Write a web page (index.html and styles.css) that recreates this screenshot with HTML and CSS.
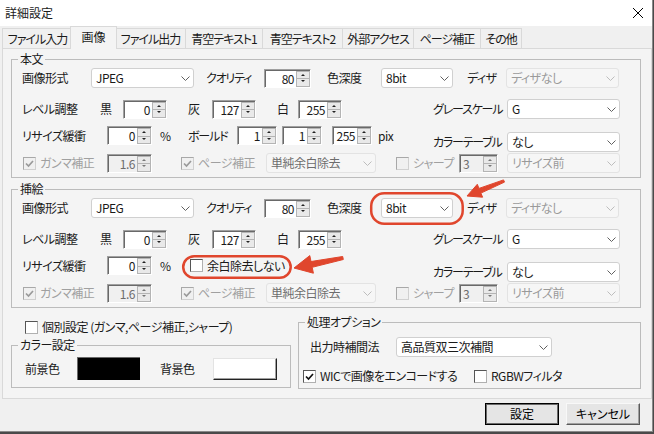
FILE: index.html
```html
<!DOCTYPE html>
<html lang="ja">
<head>
  <meta charset="UTF-8">
  <title>詳細設定</title>
  <link rel="stylesheet" href="styles.css">
</head>
<body>
<div class="window">
  <div class="titlebar">
    <span class="title">詳細設定</span>
    <svg class="close" width="12" height="12" viewBox="0 0 12 12"><path d="M1 1L11 11M11 1L1 11"/></svg>
  </div>

  <div class="tabs">
    <div class="tab">ファイル入力</div>
    <div class="tab active">画像</div>
    <div class="tab">ファイル出力</div>
    <div class="tab">青空テキスト1</div>
    <div class="tab">青空テキスト2</div>
    <div class="tab">外部アクセス</div>
    <div class="tab">ページ補正</div>
    <div class="tab last">その他</div>
  </div>

  <div class="page">
    <!-- 本文 -->
    <fieldset class="group">
      <legend>本文</legend>
      <div class="rows">
        <div class="row r1">
          <span class="lbl w69">画像形式</span>
          <span class="combo w103"><span>JPEG</span><svg viewBox="0 0 9 5"><path d="M0.5 0.5L4.5 4.5L8.5 0.5"/></svg></span>
          <span class="lbl tight ml12 w58">クオリティ</span>
          <span class="spin w47"><span class="val">80</span><span class="ud"><i></i><i></i></span></span>
          <span class="lbl ml16 w54">色深度</span>
          <span class="combo w72"><span>8bit</span><svg viewBox="0 0 9 5"><path d="M0.5 0.5L4.5 4.5L8.5 0.5"/></svg></span>
          <span class="lbl ml14 w39">ディザ</span>
          <span class="combo w113 off faint"><span>ディザなし</span><svg viewBox="0 0 9 5"><path d="M0.5 0.5L4.5 4.5L8.5 0.5"/></svg></span>
        </div>
        <div class="row r2">
          <span class="lbl w78">レベル調整</span>
          <span class="lbl w23">黒</span>
          <span class="spin w44"><span class="val">0</span><span class="ud"><i></i><i></i></span></span>
          <span class="lbl ml21 w24">灰</span>
          <span class="spin w44"><span class="val">127</span><span class="ud"><i></i><i></i></span></span>
          <span class="lbl ml21 w21">白</span>
          <span class="spin w44"><span class="val">255</span><span class="ud"><i></i><i></i></span></span>
          <span class="lbl tight push w74">グレースケール</span>
          <span class="combo w113"><span>G</span><svg viewBox="0 0 9 5"><path d="M0.5 0.5L4.5 4.5L8.5 0.5"/></svg></span>
        </div>
        <div class="row r3">
          <span class="lbl w85">リサイズ緩衝</span>
          <span class="spin w45"><span class="val">0</span><span class="ud"><i></i><i></i></span></span>
          <span class="lbl ml8 w28">%</span>
          <span class="lbl tight w49">ボールド</span>
          <span class="spin w40"><span class="val">1</span><span class="ud"><i></i><i></i></span></span>
          <span class="spin ml5 w40"><span class="val">1</span><span class="ud"><i></i><i></i></span></span>
          <span class="spin ml10 w40"><span class="val">255</span><span class="ud"><i></i><i></i></span></span>
          <span class="lbl ml6">pix</span>
          <span class="lbl tight push low w74">カラーテーブル</span>
          <span class="combo low w113"><span>なし</span><svg viewBox="0 0 9 5"><path d="M0.5 0.5L4.5 4.5L8.5 0.5"/></svg></span>
        </div>
        <div class="row r4">
          <label class="check off ml1 w84"><span class="box on"><svg viewBox="0 0 11 11"><path d="M2 5.5L4.5 8L9 3"/></svg></span>ガンマ補正</label>
          <span class="spin off w45"><span class="val">1.6</span><span class="ud"><i></i><i></i></span></span>
          <label class="check off ml29 w85"><span class="box on"><svg viewBox="0 0 11 11"><path d="M2 5.5L4.5 8L9 3"/></svg></span>ページ補正</label>
          <span class="combo off w110"><span>単純余白除去</span><svg viewBox="0 0 9 5"><path d="M0.5 0.5L4.5 4.5L8.5 0.5"/></svg></span>
          <label class="check off ml20 w63"><span class="box"></span>シャープ</label>
          <span class="spin off left w39"><span class="val">3</span><span class="ud"><i></i><i></i></span></span>
          <span class="combo off faint push w113"><span>リサイズ前</span><svg viewBox="0 0 9 5"><path d="M0.5 0.5L4.5 4.5L8.5 0.5"/></svg></span>
        </div>
      </div>
    </fieldset>

    <!-- 挿絵 -->
    <fieldset class="group">
      <legend>挿絵</legend>
      <div class="rows">
        <div class="row r1">
          <span class="lbl w69">画像形式</span>
          <span class="combo w103"><span>JPEG</span><svg viewBox="0 0 9 5"><path d="M0.5 0.5L4.5 4.5L8.5 0.5"/></svg></span>
          <span class="lbl tight ml12 w58">クオリティ</span>
          <span class="spin w47"><span class="val">80</span><span class="ud"><i></i><i></i></span></span>
          <span class="lbl ml16 w54">色深度</span>
          <span class="combo w72"><span>8bit</span><svg viewBox="0 0 9 5"><path d="M0.5 0.5L4.5 4.5L8.5 0.5"/></svg></span>
          <span class="lbl ml14 w39">ディザ</span>
          <span class="combo w113 off faint"><span>ディザなし</span><svg viewBox="0 0 9 5"><path d="M0.5 0.5L4.5 4.5L8.5 0.5"/></svg></span>
        </div>
        <div class="row r2">
          <span class="lbl w78">レベル調整</span>
          <span class="lbl w23">黒</span>
          <span class="spin w44"><span class="val">0</span><span class="ud"><i></i><i></i></span></span>
          <span class="lbl ml21 w24">灰</span>
          <span class="spin w44"><span class="val">127</span><span class="ud"><i></i><i></i></span></span>
          <span class="lbl ml21 w21">白</span>
          <span class="spin w44"><span class="val">255</span><span class="ud"><i></i><i></i></span></span>
          <span class="lbl tight push w74">グレースケール</span>
          <span class="combo w113"><span>G</span><svg viewBox="0 0 9 5"><path d="M0.5 0.5L4.5 4.5L8.5 0.5"/></svg></span>
        </div>
        <div class="row r3">
          <span class="lbl w85">リサイズ緩衝</span>
          <span class="spin w45"><span class="val">0</span><span class="ud"><i></i><i></i></span></span>
          <span class="lbl ml8 w20">%</span>
          <label class="check ml10 mid"><span class="box"></span>余白除去しない</label>
          <span class="lbl tight push low w74">カラーテーブル</span>
          <span class="combo low w113"><span>なし</span><svg viewBox="0 0 9 5"><path d="M0.5 0.5L4.5 4.5L8.5 0.5"/></svg></span>
        </div>
        <div class="row r4">
          <label class="check off ml1 w84"><span class="box on"><svg viewBox="0 0 11 11"><path d="M2 5.5L4.5 8L9 3"/></svg></span>ガンマ補正</label>
          <span class="spin off w45"><span class="val">1.6</span><span class="ud"><i></i><i></i></span></span>
          <label class="check off ml29 w85"><span class="box on"><svg viewBox="0 0 11 11"><path d="M2 5.5L4.5 8L9 3"/></svg></span>ページ補正</label>
          <span class="combo off w110"><span>単純余白除去</span><svg viewBox="0 0 9 5"><path d="M0.5 0.5L4.5 4.5L8.5 0.5"/></svg></span>
          <label class="check off ml20 w63"><span class="box"></span>シャープ</label>
          <span class="spin off left w39"><span class="val">3</span><span class="ud"><i></i><i></i></span></span>
          <span class="combo off faint push w113"><span>リサイズ前</span><svg viewBox="0 0 9 5"><path d="M0.5 0.5L4.5 4.5L8.5 0.5"/></svg></span>
        </div>
      </div>
    </fieldset>

    <div class="bottom">
      <div class="side">
        <label class="check single"><span class="box"></span>個別設定 (ガンマ,ページ補正,シャープ)</label>
        <fieldset class="group color">
          <legend>カラー設定</legend>
          <div class="swatches">
            <span class="lbl w52">前景色</span>
            <span class="swatch fg"></span>
            <span class="lbl ml20 w53">背景色</span>
            <span class="swatch bg"></span>
          </div>
        </fieldset>
      </div>
      <fieldset class="group proc">
        <legend>処理オプション</legend>
        <div class="proc-row">
          <span class="lbl w86">出力時補間法</span>
          <span class="combo w156"><span>高品質双三次補間</span><svg viewBox="0 0 9 5"><path d="M0.5 0.5L4.5 4.5L8.5 0.5"/></svg></span>
        </div>
        <div class="proc-row checks">
          <label class="check ml2 w171"><span class="box on"><svg viewBox="0 0 11 11"><path d="M2 5.5L4.5 8L9 3"/></svg></span>WICで画像をエンコードする</label>
          <label class="check"><span class="box"></span>RGBWフィルタ</label>
        </div>
      </fieldset>
    </div>
  </div>

  <div class="buttons">
    <button class="btn default">設定</button>
    <button class="btn">キャンセル</button>
  </div>

  <!-- annotations drawn over the dialog -->
  <svg class="marks" width="654" height="434" viewBox="0 0 654 434">
    <rect x="371.2" y="193.2" width="91.5" height="30.5" rx="13"/>
    <rect x="183.2" y="256.2" width="107.5" height="21.5" rx="11"/>
    <polygon class="arrow" points="467,196 477.3,184.3 479,188.4 503.5,179.9 504.5,182.1 480.9,193.1 482.6,197.2"/>
    <polygon class="arrow" points="294,268 309.8,255.6 311,261.5 342.7,256.5 343.3,259.5 312.2,267.3 313.4,273.2"/>
  </svg>
</div>
</body>
</html>
```

FILE: styles.css
```css
* {
  box-sizing: border-box;
}

body {
  margin: 0;
  background: #4a4a4a;
  font-family: "Noto Sans CJK JP", "Noto Sans", sans-serif;
  font-size: 12px;
  font-feature-settings: "palt";
  letter-spacing: -0.5px;
  color: #1a1a1a;
}

.window {
  position: relative;
  width: 653px;
  height: 432px;
  background: #f0f0f0;
  border-right: 1px solid #8a8a8a;
  border-bottom: 1px solid #8a8a8a;
  overflow: hidden;
}

/* title bar */
.titlebar {
  height: 26px;
  background: #fff;
  display: flex;
  align-items: center;
  justify-content: space-between;
  padding: 0 8px 0 5px;
}

.title {
  line-height: 14px;
  letter-spacing: 0;
}

.close path {
  stroke: #000;
  stroke-width: 1;
}

/* tab strip */
.tabs {
  display: grid;
  grid-template-columns: 70px 43px 70px 77px 80px 71px 67px 42px;
  align-items: end;
  height: 22px;
  padding-left: 2px;
}

.tab {
  height: 20px;
  line-height: 19px;
  text-align: center;
  white-space: nowrap;
  letter-spacing: -1px;
  background: #f0f0f0;
  border: 1px solid #d9d9d9;
  border-right: none;
  border-bottom: none;
}

.tab.last {
  border-right: 1px solid #d9d9d9;
}

.tab.active {
  position: relative;
  z-index: 1;
  height: 23px;
  margin: 0 -2px -1px;
  letter-spacing: 0;
  background: #f4f4f4;
  border-right: 1px solid #d9d9d9;
}

/* tab page */
.page {
  height: 351px;
  margin-left: 2px;
  background: #f4f4f4;
  border: 1px solid #d9d9d9;
}

.group {
  margin: 3px 10px 0 8px;
  padding: 0;
  min-width: 0;
  border: 1px solid #bcbcbc;
}

.group + .group {
  margin-top: 4px;
}

legend {
  margin-left: 6px;
  padding: 0 2px;
  line-height: 14px;
  height: 14px;
}

.rows {
  padding: 2px 20px 4px 10px;
}

.row {
  display: flex;
  align-items: center;
  height: 20px;
}

.r2 {
  margin-top: 11px;
}

.r3 {
  margin-top: 7px;
  height: 26px;
  align-items: flex-start;
}

.r3 .lbl {
  line-height: 19px;
}

.r3 .low {
  align-self: flex-end;
}

.r3 .lbl.low {
  line-height: 20px;
}

.r3 .mid {
  align-self: flex-start;
  height: 19px;
}

.r4 {
  margin-top: 1px;
}

.lbl {
  flex: none;
  line-height: 20px;
  white-space: nowrap;
}

.tight {
  letter-spacing: -1.2px;
}

/* widths and gaps */
.w20 { width: 20px; }
.w21 { width: 21px; }
.w23 { width: 23px; }
.w24 { width: 24px; }
.w28 { width: 28px; }
.w39 { width: 39px; }
.w40 { width: 40px; }
.w44 { width: 44px; }
.w45 { width: 45px; }
.w47 { width: 47px; }
.w49 { width: 49px; }
.w52 { width: 52px; }
.w53 { width: 53px; }
.w54 { width: 54px; }
.w58 { width: 58px; }
.w63 { width: 63px; }
.w69 { width: 69px; }
.w72 { width: 72px; }
.w74 { width: 74px; }
.w78 { width: 78px; }
.w84 { width: 84px; }
.w85 { width: 85px; }
.w86 { width: 86px; }
.w103 { width: 103px; }
.w110 { width: 110px; }
.w113 { width: 113px; }
.w156 { width: 156px; }
.w171 { width: 171px; }

.ml1 { margin-left: 1px; }
.ml2 { margin-left: 2px; }
.ml5 { margin-left: 5px; }
.ml6 { margin-left: 6px; }
.ml8 { margin-left: 8px; }
.ml10 { margin-left: 10px; }
.ml12 { margin-left: 12px; }
.ml14 { margin-left: 14px; }
.ml16 { margin-left: 16px; }
.ml20 { margin-left: 20px; }
.ml21 { margin-left: 21px; }
.ml29 { margin-left: 29px; }
.push { margin-left: auto; }

/* combo box */
.combo {
  flex: none;
  display: flex;
  align-items: center;
  height: 20px;
  padding-left: 4px;
  background: #fff;
  border: 1px solid #d0d0d0;
  border-radius: 3px;
}

.combo span {
  flex: 1;
  line-height: 18px;
  white-space: nowrap;
  overflow: hidden;
}

.combo svg {
  width: 9px;
  height: 5px;
  margin-right: 3px;
}

.combo path {
  fill: none;
  stroke: #606060;
  stroke-width: 1;
}

.combo.off {
  background: #f6f6f6;
  border-color: #e3e3e3;
  color: #6d6d6d;
}

.combo.faint {
  color: #9a9a9a;
}

.combo.off path {
  stroke: #bdbdbd;
}

/* spinner (edit + up/down) */
.spin {
  flex: none;
  display: flex;
  height: 19px;
  background: #fff;
  border: 1px solid;
  border-color: #a0a0a0 #fff #fff #a0a0a0;
  box-shadow: inset 1px 1px 0 #696969;
}

.spin .val {
  flex: 1;
  text-align: right;
  padding: 1px 2px 0 0;
  line-height: 16px;
}

.spin.left .val {
  text-align: left;
  padding-left: 3px;
}

.spin .ud {
  width: 14px;
  display: flex;
  flex-direction: column;
  padding: 1px 0 0;
}

.spin .ud i {
  flex: 1;
  position: relative;
  background: #e9e9e9;
  border: 1px solid #b4b4b4;
}

.spin .ud i + i {
  border-top: none;
}

.spin .ud i::after {
  content: "";
  position: absolute;
  left: 4px;
  top: 2px;
  border-left: 2px solid transparent;
  border-right: 2px solid transparent;
  border-bottom: 2px solid #222;
}

.spin .ud i + i::after {
  top: 1px;
  border-bottom: none;
  border-top: 2px solid #222;
}

.spin.off {
  background: #f0f0f0;
  color: #6d6d6d;
}

.spin.off .ud i::after {
  border-bottom-color: #777;
}

.spin.off .ud i + i::after {
  border-top-color: #777;
}

/* checkboxes */
.check {
  flex: none;
  display: flex;
  align-items: center;
  gap: 4px;
  line-height: 14px;
  white-space: nowrap;
}

.box {
  flex: none;
  width: 13px;
  height: 13px;
  background: #fff;
  border: 1px solid;
  border-color: #555 #b0b0b0 #b0b0b0 #555;
}

.box svg {
  display: block;
  width: 11px;
  height: 11px;
}

.box path {
  fill: none;
  stroke: #111;
  stroke-width: 1.7;
}

.check.off {
  color: #a0a0a0;
}

.check.off .box {
  background: #f0f0f0;
  border-color: #a8a8a8 #d0d0d0 #d0d0d0 #a8a8a8;
}

.check.off .box path {
  stroke: #9a9a9a;
}

/* lower area */
.bottom {
  display: flex;
  align-items: flex-start;
  margin: 0 10px 0 8px;
}

.side {
  width: 280px;
}

.check.single {
  margin-top: 12px;
  padding-left: 14px;
  height: 14px;
}

.bottom .group {
  margin: 0;
}

.side .color {
  margin-top: 4px;
}

.swatches {
  display: flex;
  align-items: center;
  height: 23px;
  margin: 5px 0 7px 13px;
}

.swatch {
  flex: none;
  height: 23px;
}

.swatch.fg {
  width: 63px;
  background: #000;
  border-top: 1px solid #696969;
  border-left: 1px solid #696969;
}

.swatch.bg {
  width: 64px;
  height: 22px;
  background: #fff;
  border: 1px solid;
  border-color: #e3e3e3 #222 #222 #e3e3e3;
  box-shadow: inset -1px -1px 0 #a0a0a0;
}

.bottom .proc {
  flex: 1;
  margin: 7px 0 0 7px;
}

.proc-row {
  display: flex;
  align-items: center;
  height: 20px;
  margin: 8px 0 0 11px;
}

.proc-row.checks {
  height: 14px;
  margin: 12px 0 5px 0;
  padding-left: 2px;
}

/* dialog buttons */
.buttons {
  display: flex;
  justify-content: flex-end;
  gap: 7px;
  padding: 4px 12px 0 0;
}

.btn {
  width: 74px;
  height: 22px;
  padding: 0;
  font: inherit;
  line-height: 18px;
  color: #000;
  background: #e5e5e5;
  border: 1px solid;
  border-color: #f8f8f8 #5a5a5a #5a5a5a #f8f8f8;
  box-shadow: inset -1px -1px 0 #a0a0a0;
}

.btn.default {
  border: 1px solid #000;
  box-shadow: inset 0 0 0 1px #6a6a6a;
}

/* red annotations */
.marks {
  position: absolute;
  top: 0;
  left: 0;
  pointer-events: none;
}

.marks rect {
  fill: none;
  stroke: #e0462d;
  stroke-width: 2.5;
}

.marks .arrow {
  fill: #e0462d;
  stroke: #e0462d;
  stroke-width: 1;
  stroke-linejoin: round;
}
```
